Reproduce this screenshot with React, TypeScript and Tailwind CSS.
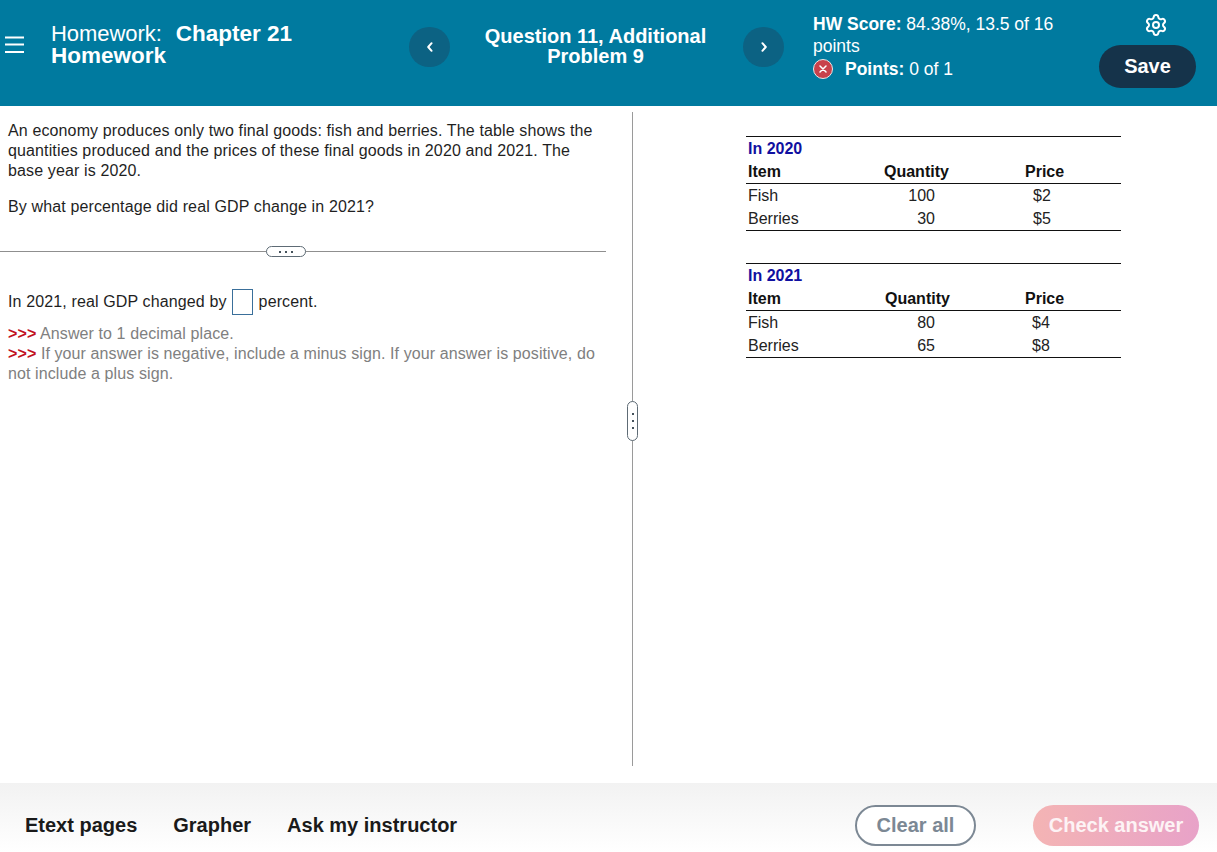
import { Settings } from 'lucide-react'

const FONT = "font-['Liberation_Sans',Arial,sans-serif]"

const TABLES = [
  {
    year: 'In 2020',
    qtyHeadPad: 'pl-0',
    rows: [
      { item: 'Fish', qty: '100', price: '$2', pricePad: 'pl-[8px]' },
      { item: 'Berries', qty: '30', price: '$5', pricePad: 'pl-[8px]' },
    ],
  },
  {
    year: 'In 2021',
    qtyHeadPad: 'pl-[1px]',
    rows: [
      { item: 'Fish', qty: '80', price: '$4', pricePad: 'pl-[7px]' },
      { item: 'Berries', qty: '65', price: '$8', pricePad: 'pl-[7px]' },
    ],
  },
]

function NavButton({ dir }: { dir: 'left' | 'right' }) {
  return (
    <button className="w-[41px] h-[40px] rounded-full bg-[#0c6283] flex items-center justify-center shrink-0">
      <svg width="8" height="12" viewBox="0 0 8 12" fill="none" stroke="white" strokeWidth="2" strokeLinecap="round" strokeLinejoin="round">
        <path d={dir === 'left' ? 'M5.6 2.2 2.2 6l3.4 3.8' : 'M2.4 2.2 5.8 6l-3.4 3.8'} />
      </svg>
    </button>
  )
}

function Header() {
  return (
    <header className="h-[106px] bg-[#007a9f] flex text-white shrink-0">
      <button className="w-[51px] shrink-0 pl-[5px] pt-[36px] self-start">
        <svg width="19" height="17" viewBox="0 0 19 17" stroke="white" strokeWidth="2" className="block">
          <path d="M0 1.5h19M0 8.5h19M0 16h19" />
        </svg>
      </button>
      <div className="w-[358px] shrink-0 pt-[23px] text-[22.5px] leading-[22px] font-bold">
        <span className="font-normal text-[22px] tracking-[-0.05px]">Homework:</span>
        <span className="ml-[14px]">Chapter 21</span>
        <br />
        Homework
      </div>
      <div className="pt-[27px]"><NavButton dir="left" /></div>
      <div className="w-[293px] shrink-0 pt-[26px] pr-[2px] text-center text-[20px] leading-[20px] font-bold">
        Question 11, Additional
        <br />
        Problem 9
      </div>
      <div className="pt-[27px]"><NavButton dir="right" /></div>
      <div className="w-[315px] shrink-0 pl-[29px] pt-[13px] text-[17.5px] leading-[22px]">
        <div className="w-[250px]">
          <b>HW Score:</b> 84.38%, 13.5 of 16 points
        </div>
        <div className="flex items-center mt-[1px]">
          <span className="w-[20px] h-[20px] rounded-full bg-[#c8414b] border border-[#e8e8e8] flex items-center justify-center mr-[12px]">
            <svg width="8" height="8" viewBox="0 0 8 8" stroke="white" strokeWidth="1.5" strokeLinecap="round">
              <path d="M1 1l6 6M7 1 1 7" />
            </svg>
          </span>
          <span><b>Points:</b> 0 of 1</span>
        </div>
      </div>
      <div className="w-[97px] shrink-0 flex flex-col pt-[13px]">
        <Settings size={24} strokeWidth={2} className="text-white ml-[45px]" />
        <button className="mt-[8px] w-[97px] h-[43px] rounded-full bg-[#15334a] text-[20px] font-bold pb-[1px]">Save</button>
      </div>
    </header>
  )
}

function QuestionPane() {
  return (
    <section className="w-[632px] shrink-0 text-[16px] leading-[20px] text-[#1f1f1f] tracking-[0.13px]">
      <div className="pl-[8px] pr-[30px] pt-[15px]">
        <p>
          An economy produces only two final goods: fish and berries. The table shows the quantities produced and the prices of these final goods in 2020 and 2021. The base year is 2020.
        </p>
        <p className="mt-[16px]">By what percentage did real GDP change in 2021?</p>
      </div>
      <div className="relative mt-[34px] w-[606px] h-px bg-[#8f8f8f]">
        <div className="absolute left-[266px] -top-[5px] w-[40px] h-[11px] rounded-full bg-white border border-[#5e6b75] flex items-center justify-center gap-[4px]">
          <span className="w-[2px] h-[2px] bg-[#45525c]" />
          <span className="w-[2px] h-[2px] bg-[#45525c]" />
          <span className="w-[2px] h-[2px] bg-[#45525c]" />
        </div>
      </div>
      <div className="pl-[8px] pr-[30px]">
        <div className="flex items-center mt-[37px] h-[26px]">
          <span>In 2021, real GDP changed by</span>
          <span className="w-[21px] h-[26px] ml-[5px] mr-[6px] border border-[#3a6f9a] bg-white" />
          <span>percent.</span>
        </div>
        <div className="mt-[9px] text-[#808080] tracking-[0.1px]">
          <p><span className="font-bold text-[#c1121f]">&gt;&gt;&gt;</span> Answer to 1 decimal place.</p>
          <p><span className="font-bold text-[#c1121f]">&gt;&gt;&gt;</span> If your answer is negative, include a minus sign. If your answer is positive, do not include a plus sign.</p>
        </div>
      </div>
    </section>
  )
}

function DataTable({ table }: { table: (typeof TABLES)[0] }) {
  return (
    <div className="w-[375px] border-y border-[#111] text-[16px] text-[#222]">
      <div className="h-[23px] pl-[2px] pt-[1px] leading-[22px] font-bold text-[#1010a0]">{table.year}</div>
      <div className="grid grid-cols-[136px_141px_1fr] h-[24px] pl-[2px] border-b border-[#111] leading-[23px] font-bold text-[#111]">
        <span>Item</span>
        <span className={table.qtyHeadPad}>Quantity</span>
        <span>Price</span>
      </div>
      {table.rows.map((row) => (
        <div key={row.item} className="grid grid-cols-[136px_141px_1fr] h-[23px] pl-[2px] leading-[23px]">
          <span>{row.item}</span>
          <span className="w-[51px] text-right">{row.qty}</span>
          <span className={row.pricePad}>{row.price}</span>
        </div>
      ))}
    </div>
  )
}

function Footer() {
  return (
    <footer className="h-[69px] shrink-0 bg-gradient-to-b from-[#f2f2f2] to-white flex items-center pt-[15px] pl-[25px] pr-[18px] text-[20px] font-bold">
      <a className="text-[#1a1a1a]">Etext pages</a>
      <a className="ml-[36px] text-[#1a1a1a]">Grapher</a>
      <a className="ml-[36px] text-[#1a1a1a]">Ask my instructor</a>
      <button className="ml-auto w-[121px] h-[41px] rounded-full border-2 border-[#7c8894] bg-white text-[#7c8894]">Clear all</button>
      <button className="ml-[57px] w-[166px] h-[41px] rounded-full bg-gradient-to-r from-[#f4b4b4] to-[#e8a2c8] text-[#fdf3f5]">Check answer</button>
    </footer>
  )
}

export default function App() {
  return (
    <div className={`${FONT} relative h-[852px] w-[1217px] overflow-hidden bg-white flex flex-col`}>
      <Header />
      <main className="flex-1 flex min-h-0">
        <QuestionPane />
        <div className="relative w-px mt-[6px] mb-[17px] bg-[#9a9a9a] shrink-0">
          <div className="absolute -left-[5px] top-[289px] w-[11px] h-[40px] rounded-full bg-white border border-[#5e6b75] flex flex-col items-center justify-center gap-[5px]">
            <span className="w-[2px] h-[2px] bg-[#45525c]" />
            <span className="w-[2px] h-[2px] bg-[#45525c]" />
            <span className="w-[2px] h-[2px] bg-[#45525c]" />
          </div>
        </div>
        <section className="flex-1 pl-[113px] pt-[30px] flex flex-col gap-[32px]">
          {TABLES.map((table) => (
            <DataTable key={table.year} table={table} />
          ))}
        </section>
      </main>
      <Footer />
    </div>
  )
}
